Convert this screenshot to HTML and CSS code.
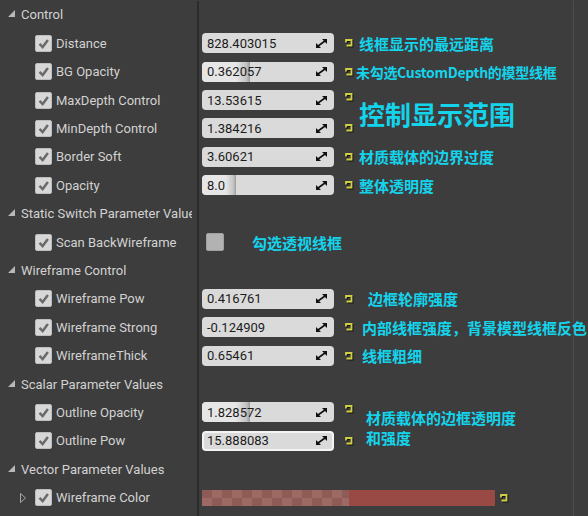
FILE: index.html
```html
<!DOCTYPE html>
<html>
<head>
<meta charset="utf-8">
<link rel="stylesheet" href="styles.css">
</head>
<body>
<svg width="0" height="0" class="defs">
  <defs>
    <symbol id="reset" viewBox="0 0 10 10">
      <polyline points="2,4.5 2,2 7.5,2 7.5,7.5 2.5,7.5" fill="none" stroke="#151515" stroke-width="1.8" transform="translate(1,1)"/>
      <polyline points="2,4.5 2,2 7.5,2 7.5,7.5 2.5,7.5" fill="none" stroke="#cfcf45" stroke-width="1.8"/>
    </symbol>
    <symbol id="spin" viewBox="0 0 11 9">
      <polygon points="11,0 11,5 6,0" fill="#111"/>
      <polygon points="0,9 0,4 5,9" fill="#111"/>
      <line x1="9" y1="2" x2="2" y2="7" stroke="#111" stroke-width="1.6"/>
    </symbol>
    <symbol id="check" viewBox="0 0 17 17">
      <polyline points="4,9 7.5,12.5 13.5,4.5" fill="none" stroke="#6a6a6a" stroke-width="2.8"/>
    </symbol>
  </defs>
</svg>
<div class="panel">
  <div class="row header">
    <div class="name"><svg class="tri" viewBox="0 0 7 7"><polygon points="7,0 7,7 0,7"/></svg><span>Control</span></div>
    <div class="value"></div>
  </div>
  <div class="row">
    <div class="name param"><span class="cb"><svg><use href="#check"/></svg></span><span>Distance</span></div>
    <div class="value"><div class="field"><span class="num">828.403015</span><svg class="spin"><use href="#spin"/></svg></div><svg class="rs"><use href="#reset"/></svg><span class="note">线框显示的最远距离</span></div>
  </div>
  <div class="row">
    <div class="name param"><span class="cb"><svg><use href="#check"/></svg></span><span>BG Opacity</span></div>
    <div class="value"><div class="field"><span class="fill" style="width:48px"></span><span class="num">0.362057</span><svg class="spin"><use href="#spin"/></svg></div><svg class="rs"><use href="#reset"/></svg><span class="note small tight">未勾选CustomDepth的模型线框</span></div>
  </div>
  <div class="row">
    <div class="name param"><span class="cb"><svg><use href="#check"/></svg></span><span>MaxDepth Control</span></div>
    <div class="value"><div class="field"><span class="num">13.53615</span><svg class="spin"><use href="#spin"/></svg></div><svg class="rs up"><use href="#reset"/></svg></div>
  </div>
  <div class="row">
    <div class="name param"><span class="cb"><svg><use href="#check"/></svg></span><span>MinDepth Control</span></div>
    <div class="value"><div class="field"><span class="num">1.384216</span><svg class="spin"><use href="#spin"/></svg></div><svg class="rs"><use href="#reset"/></svg></div>
  </div>
  <div class="row">
    <div class="name param"><span class="cb"><svg><use href="#check"/></svg></span><span>Border Soft</span></div>
    <div class="value"><div class="field"><span class="num">3.60621</span><svg class="spin"><use href="#spin"/></svg></div><svg class="rs"><use href="#reset"/></svg><span class="note">材质载体的边界过度</span></div>
  </div>
  <div class="row">
    <div class="name param"><span class="cb"><svg><use href="#check"/></svg></span><span>Opacity</span></div>
    <div class="value"><div class="field"><span class="fill" style="width:34px"></span><span class="num">8.0</span><svg class="spin"><use href="#spin"/></svg></div><svg class="rs"><use href="#reset"/></svg><span class="note">整体透明度</span></div>
  </div>
  <div class="row header">
    <div class="name"><svg class="tri" viewBox="0 0 7 7"><polygon points="7,0 7,7 0,7"/></svg><span>Static Switch Parameter Values</span></div>
    <div class="value"></div>
  </div>
  <div class="row">
    <div class="name param"><span class="cb"><svg><use href="#check"/></svg></span><span>Scan BackWireframe</span></div>
    <div class="value"><span class="cb off"></span><span class="note scan">勾选透视线框</span></div>
  </div>
  <div class="row header">
    <div class="name"><svg class="tri" viewBox="0 0 7 7"><polygon points="7,0 7,7 0,7"/></svg><span>Wireframe Control</span></div>
    <div class="value"></div>
  </div>
  <div class="row">
    <div class="name param"><span class="cb"><svg><use href="#check"/></svg></span><span>Wireframe Pow</span></div>
    <div class="value"><div class="field"><span class="num">0.416761</span><svg class="spin"><use href="#spin"/></svg></div><svg class="rs"><use href="#reset"/></svg><span class="note pow">边框轮廓强度</span></div>
  </div>
  <div class="row">
    <div class="name param"><span class="cb"><svg><use href="#check"/></svg></span><span>Wireframe Strong</span></div>
    <div class="value"><div class="field"><span class="num">-0.124909</span><svg class="spin"><use href="#spin"/></svg></div><svg class="rs"><use href="#reset"/></svg><span class="note near">内部线框强度，背景模型线框反色</span></div>
  </div>
  <div class="row">
    <div class="name param"><span class="cb"><svg><use href="#check"/></svg></span><span>WireframeThick</span></div>
    <div class="value"><div class="field"><span class="num">0.65461</span><svg class="spin"><use href="#spin"/></svg></div><svg class="rs"><use href="#reset"/></svg><span class="note near">线框粗细</span></div>
  </div>
  <div class="row header">
    <div class="name"><svg class="tri" viewBox="0 0 7 7"><polygon points="7,0 7,7 0,7"/></svg><span>Scalar Parameter Values</span></div>
    <div class="value"></div>
  </div>
  <div class="row">
    <div class="name param"><span class="cb"><svg><use href="#check"/></svg></span><span>Outline Opacity</span></div>
    <div class="value"><div class="field"><span class="fill" style="width:48px"></span><span class="num">1.828572</span><svg class="spin"><use href="#spin"/></svg></div><svg class="rs up"><use href="#reset"/></svg></div>
  </div>
  <div class="row">
    <div class="name param"><span class="cb"><svg><use href="#check"/></svg></span><span>Outline Pow</span></div>
    <div class="value"><div class="field focus"><span class="num">15.888083</span><svg class="spin"><use href="#spin"/></svg></div><svg class="rs"><use href="#reset"/></svg></div>
  </div>
  <div class="row header">
    <div class="name"><svg class="tri" viewBox="0 0 7 7"><polygon points="7,0 7,7 0,7"/></svg><span>Vector Parameter Values</span></div>
    <div class="value"></div>
  </div>
  <div class="row">
    <div class="name param color"><svg class="exp" viewBox="0 0 6 10"><polygon points="0.5,0.5 5.5,5 0.5,9.5"/></svg><span class="cb"><svg><use href="#check"/></svg></span><span>Wireframe Color</span></div>
    <div class="value"><div class="swatch"><span class="checker"></span><span class="solid"></span></div><svg class="rs"><use href="#reset"/></svg></div>
  </div>
  <div class="row filler">
    <div class="name"></div>
    <div class="value"></div>
  </div>
  <div class="overlay big">控制显示范围</div>
  <div class="overlay twoline">材质载体的边框透明度<br>和强度</div>
</div>
</body>
</html>
```

FILE: styles.css
```css
* { box-sizing: border-box; }
html, body {
  margin: 0;
  padding: 0;
  background: #3d3d3d;
}
.defs { position: absolute; width: 0; height: 0; }
.panel {
  position: relative;
  width: 588px;
  height: 516px;
  display: flex;
  flex-direction: column;
  padding-top: 0.6px;
  font-family: Roboto, "Liberation Sans", sans-serif;
  font-size: 13px;
  color: #d2d2d2;
  overflow: hidden;
}
.row {
  display: grid;
  grid-template-columns: 199px 375px 14px;
  height: 28.42px;
  flex: none;
}
.row.filler { flex: 1; height: auto; }
.name {
  display: flex;
  align-items: center;
  border-right: 2px solid #2b2b2b;
  padding-right: 5px;
  white-space: nowrap;
  overflow: hidden;
  min-width: 0;
}
.header .name { padding-left: 8px; gap: 6px; }
.header .name span { overflow: hidden; }
.tri { width: 7px; height: 7px; fill: #b8b8b8; flex: none; margin-top: -2px; }
.name.param { padding-left: 35px; gap: 4px; }
.name.param.color { padding-left: 20px; }
.exp { width: 6px; height: 10px; fill: none; stroke: #a8a8a8; stroke-width: 1; margin-right: 5px; flex: none; }
.cb {
  width: 17px;
  height: 17px;
  border-radius: 2px;
  background: #d7d7d7;
  border: 1px solid #bdbdbd;
  flex: none;
  display: flex;
}
.cb svg { width: 15px; height: 15px; }
.cb.off {
  width: 18px;
  height: 18px;
  background: #b2b2b2;
  border-color: #a0a0a0;
  margin-left: 4px;
}
.value {
  display: flex;
  align-items: center;
  border-right: 1px solid #4d4d4d;
  padding-left: 3px;
  white-space: nowrap;
  min-width: 0;
}
.field {
  position: relative;
  width: 132px;
  height: 20px;
  border-radius: 4px;
  background: #dadada;
  display: flex;
  align-items: center;
  flex: none;
  overflow: hidden;
}
.field.focus { border: 2px solid #f4f4f4; }
.fill {
  position: absolute;
  left: 0;
  top: 0;
  bottom: 0;
  background: linear-gradient(to right, #e6e6e6 0%, #e6e6e6 70%, #c4c4c4 92%, #9c9c9c 100%);
  border-radius: 4px 0 0 4px;
}
.num {
  position: relative;
  padding-left: 5px;
  color: #1c1c1c;
  font-size: 13px;
  flex: 1;
}
.field.focus .num { padding-left: 3px; }
.spin { position: relative; width: 11px; height: 9px; margin-right: 7px; flex: none; }
.field.focus .spin { margin-right: 5px; }
.rs { width: 10px; height: 10px; margin-left: 10px; flex: none; }
.rs.up { margin-top: -6px; }
.note {
  font-family: "Noto Sans CJK SC", sans-serif;
  font-weight: 700;
  font-size: 15px;
  color: #14d4ec;
  margin-left: 5px;
  line-height: 1;
}
.note.small { font-size: 14px; margin-left: 2px; }
.note.tight { letter-spacing: -0.3px; }
.note.scan { margin-left: 28px; }
.note.pow { margin-left: 14px; }
.note.near { margin-left: 8px; }
.swatch {
  width: 293px;
  height: 16px;
  display: flex;
  flex: none;
}
.checker {
  width: 147px;
  height: 16px;
  background-color: #8f5b56;
  background-image: conic-gradient(#9c6963 25%, transparent 0 50%, #9c6963 0 75%, transparent 0);
  background-size: 20px 16px;
}
.solid { flex: 1; background: #9a4a44; }
.swatch + .rs { margin-left: 4px; }
.overlay {
  position: absolute;
  font-family: "Noto Sans CJK SC", sans-serif;
  font-weight: 700;
  color: #14d4ec;
  white-space: nowrap;
}
.big { left: 359px; top: 99px; font-size: 26px; line-height: 30px; }
.twoline { left: 366px; top: 408px; font-size: 15px; line-height: 20px; }
```
